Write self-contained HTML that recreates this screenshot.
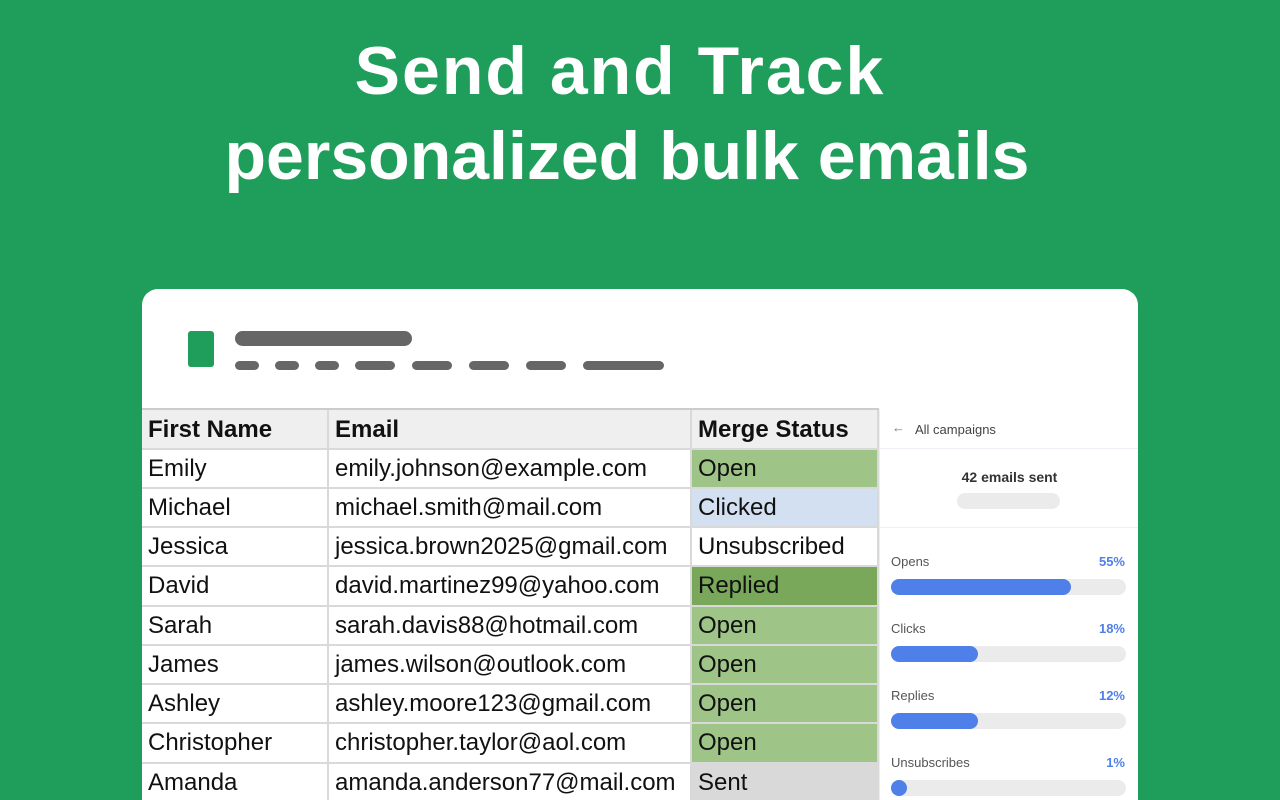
<!DOCTYPE html>
<html style="width:1280px;height:800px;overflow:hidden"><head><meta charset="utf-8"><style>
*{margin:0;padding:0;box-sizing:border-box}
body{width:1280px;height:800px;overflow:hidden;background:#1f9d5a;font-family:"Liberation Sans",sans-serif;position:relative}
.h{position:absolute;width:1280px;text-align:center;color:#fff;font-size:68px;font-weight:bold;letter-spacing:0}
.card{position:absolute;left:142px;top:289px;width:996px;height:511px;background:#fff;border-radius:16px 16px 0 0;overflow:hidden}
.bar{position:absolute;background:#666;border-radius:6px}
.c{position:absolute;font-size:24px;color:#111;padding-left:6px;border-right:2px solid #d9d9d9;border-bottom:2px solid #d9d9d9;white-space:nowrap;overflow:hidden}
.panel{position:absolute;left:737px;top:120px;width:259px;height:391px;background:#fff;border-left:1px solid #eee}
.lab{position:absolute;left:11px;font-size:13px;color:#555}
.pct{position:absolute;right:13px;font-size:13px;color:#4f7fe8;font-weight:bold}
.tr{position:absolute;left:11px;width:235px;height:16px;background:#ebebeb;border-radius:8px}
.fl{height:16px;background:#4f7fe8;border-radius:8px}
</style></head><body>
<div class="h" style="top:32px;left:-20px;letter-spacing:2px">Send <span style="font-weight:600">and</span> Track</div>
<div class="h" style="top:117px;left:-13px">personalized bulk emails</div>
<div class="card">
<div style="position:absolute;left:46px;top:42px;width:26px;height:36px;background:#1f9d5a;border-radius:3px"></div>
<div class="bar" style="left:93px;top:42px;width:177px;height:15px;border-radius:8px"></div>
<div class="bar" style="left:93px;top:72px;width:24px;height:9px"></div>
<div class="bar" style="left:133px;top:72px;width:24px;height:9px"></div>
<div class="bar" style="left:173px;top:72px;width:24px;height:9px"></div>
<div class="bar" style="left:213px;top:72px;width:40px;height:9px"></div>
<div class="bar" style="left:270px;top:72px;width:40px;height:9px"></div>
<div class="bar" style="left:327px;top:72px;width:40px;height:9px"></div>
<div class="bar" style="left:384px;top:72px;width:40px;height:9px"></div>
<div class="bar" style="left:441px;top:72px;width:81px;height:9px"></div>
<div style="position:absolute;left:0;top:119px;width:737px;height:3px;background:#ccc"></div>
<div id="t"></div>
<div class="panel">
<div style="position:absolute;left:0;top:0;width:259px;height:40px;border-bottom:1px solid #eef0f5"><span style="position:absolute;left:12px;top:11px;font-size:13px;color:#777">←</span><span style="position:absolute;left:35px;top:13px;font-size:13px;color:#444">All campaigns</span></div>
<div style="position:absolute;left:0;top:40px;width:259px;height:79px;border-bottom:1px solid #eef0f5">
<div style="position:absolute;top:20px;width:259px;text-align:center;font-size:14px;font-weight:bold;color:#333">42 emails sent</div>
<div style="position:absolute;left:77px;top:44px;width:103px;height:16px;background:#ebebeb;border-radius:8px"></div></div>
<div class="lab" style="top:145px">Opens</div><div class="pct" style="top:145px">55%</div>
<div class="tr" style="top:170px"><div class="fl" style="width:180px"></div></div>
<div class="lab" style="top:212px">Clicks</div><div class="pct" style="top:212px">18%</div>
<div class="tr" style="top:237px"><div class="fl" style="width:87px"></div></div>
<div class="lab" style="top:279px">Replies</div><div class="pct" style="top:279px">12%</div>
<div class="tr" style="top:304px"><div class="fl" style="width:87px"></div></div>
<div class="lab" style="top:346px">Unsubscribes</div><div class="pct" style="top:346px">1%</div>
<div class="tr" style="top:371px"><div class="fl" style="width:16px"></div></div>
</div>
</div>
<script>
var rows=[["Emily","emily.johnson@example.com","Open"],["Michael","michael.smith@mail.com","Clicked"],["Jessica","jessica.brown2025@gmail.com","Unsubscribed"],["David","david.martinez99@yahoo.com","Replied"],["Sarah","sarah.davis88@hotmail.com","Open"],["James","james.wilson@outlook.com","Open"],["Ashley","ashley.moore123@gmail.com","Open"],["Christopher","christopher.taylor@aol.com","Open"],["Amanda","amanda.anderson77@mail.com","Sent"]];
var col={Open:"#9fc487",Clicked:"#d3e0f1",Unsubscribed:"#fff",Replied:"#79a85a",Sent:"#d9d9d9"};
var tops=[121,161,200,239,278,318,357,396,435,475,514];
var h='',L=[0,187,550],W=[187,363,187];
var hd=["First Name","Email","Merge Status"];
for(var i=0;i<3;i++)h+='<div class="c" style="left:'+L[i]+'px;top:121px;width:'+W[i]+'px;height:40px;line-height:40px;background:#efefef;font-weight:bold">'+hd[i]+'</div>';
rows.forEach(function(r,j){var y=tops[j+1],ht=tops[j+2]-y;for(var i=0;i<3;i++){var bg=i==2?col[r[2]]:'#fff';h+='<div class="c" style="left:'+L[i]+'px;top:'+y+'px;width:'+W[i]+'px;height:'+ht+'px;line-height:'+(ht-2)+'px;background:'+bg+'">'+r[i]+'</div>';}});
document.getElementById('t').innerHTML=h;
</script>
</body></html>
